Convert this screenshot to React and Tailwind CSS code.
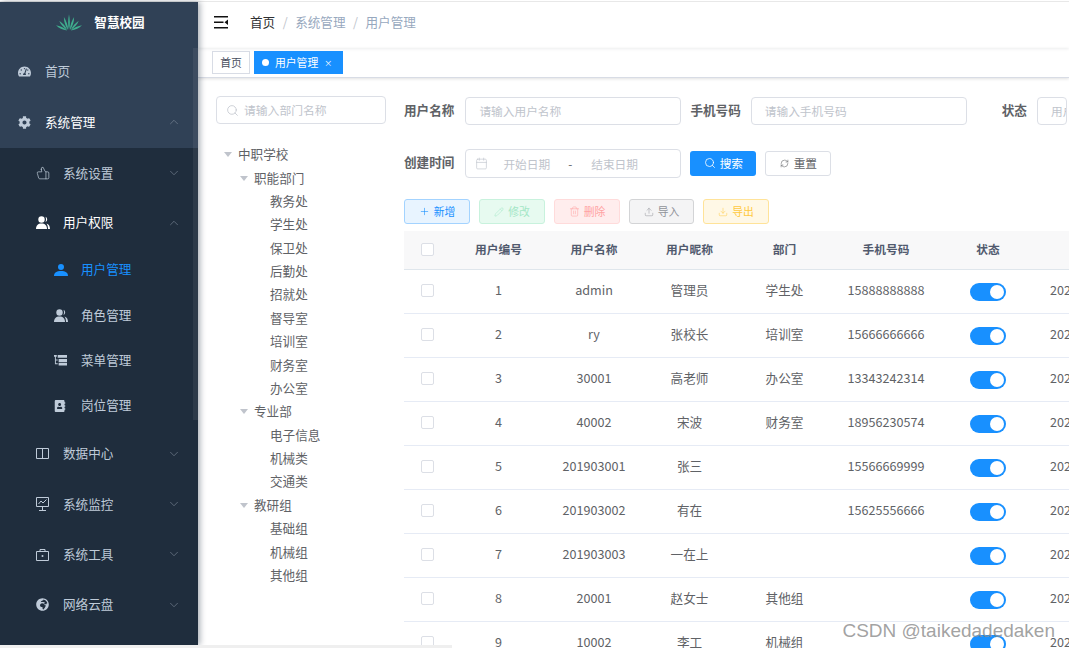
import { Calendar, ChevronDown, ChevronUp, Download, Pencil, Plus, RefreshCw, Search, ThumbsUp, Trash2, Upload } from 'lucide-react'
import { FaAddressBook, FaCog, FaGlobeAfrica, FaTachometerAlt } from 'react-icons/fa'

const fontStack = { fontFamily: '"Noto Sans CJK SC", "Liberation Sans", sans-serif' }

function MenuTree() {
  return (
    <svg viewBox="0 0 14 14" width="13" height="13" fill="currentColor">
      <path d="M0 1h3v2H0zM4 1h10v3H4zM1 3h1v8H1zM2 6h2v1H2zM2 10h2v1H2zM5 5.500h9v3H5zM5 9.500h9v3H5z" />
    </svg>
  )
}

function People() {
  return (
    <svg viewBox="0 0 14 13" width="14" height="13" fill="currentColor">
      <circle cx="5.500" cy="3.500" r="3.200" />
      <path d="M0 13c0-3.500 2-5.500 5.500-5.500S11 9.500 11 13z" />
      <path d="M9.500.8a3 3 0 0 1 0 5.400c.7-1.700.7-3.700 0-5.400zM10.500 7.500c2.200.5 3.500 2.500 3.500 5.500h-2c0-2.200-.4-4-1.500-5.500z" />
    </svg>
  )
}

function Person() {
  return (
    <svg viewBox="0 0 14 12" width="14" height="12" fill="currentColor">
      <circle cx="7" cy="3" r="3" />
      <path d="M0 12c0-3.200 2.500-5 7-5s7 1.800 7 5z" />
    </svg>
  )
}

function BoxColumns() {
  return (
    <svg viewBox="0 0 13 11" width="13" height="11" fill="none" stroke="currentColor" strokeWidth="1">
      <path d="M.5.500h12v10H.5zM6.500.500v10" />
    </svg>
  )
}

function MonitorChart() {
  return (
    <svg viewBox="0 0 13 14" width="13" height="14" fill="none" stroke="currentColor" strokeWidth="1">
      <path d="M.5.500h12v9H.5zM6.500 9.500v3.500M3 13.500h7M2.500 7l2.500-3 2 2 3.500-3.500" />
    </svg>
  )
}

function Toolbox() {
  return (
    <svg viewBox="0 0 13 13" width="13" height="13" fill="none" stroke="currentColor" strokeWidth="1">
      <path d="M.5 3.500h12v9H.5zM4 3.500v-2h5v2" />
      <circle cx="6.500" cy="8" r="1" fill="currentColor" stroke="none" />
    </svg>
  )
}

function Logo() {
  return (
    <svg viewBox="0 0 28 18" width="26" height="17" fill="#3fae8e">
      <path d="M14 17C12.500 12 13 5 14 0c1 5 1.500 12 0 17z" />
      <path d="M13 17C10 13 8.500 8 8.500 3 11 7 13 12 13 17z" />
      <path d="M15 17c3-4 4.500-9 4.500-14C17 7 15 12 15 17z" />
      <path d="M12 17C8 14 5 11 3.500 7 7 9.500 10.500 13 12 17z" />
      <path d="M16 17c4-3 7-6 8.500-10C21 9.500 17.500 13 16 17z" />
      <path d="M12 17.500C7 17 3 15 0 12c4 1 9 2.500 12 5.500z" />
      <path d="M16 17.500c5-.5 9-2.500 12-5.500-4 1-9 2.500-12 5.500z" />
    </svg>
  )
}

function SideItem({ icon, label, level = 0, arrow, active, white, rowClass = 'h-[50px]' }) {
  const pad = level === 0 ? 'pl-[18px]' : level === 1 ? 'pl-[36px]' : 'pl-[54px]'
  const color = active ? 'text-[#1890ff]' : white ? 'text-white' : 'text-[#bfcbd9]'
  return (
    <div className={`relative flex shrink-0 items-center ${rowClass} ${pad} ${color} text-[12.600px]`}>
      <span className="flex w-[27px] shrink-0 items-center">{icon}</span>
      <span>{label}</span>
      {arrow === 'down' && <ChevronDown size={14} strokeWidth={1} className="absolute right-[17px] text-[#8590a0]" />}
      {arrow === 'up' && <ChevronUp size={14} strokeWidth={1} className="absolute right-[17px] text-[#8590a0]" />}
    </div>
  )
}

function Sidebar() {
  return (
    <aside className="relative z-10 flex h-[643px] w-[198px] shrink-0 flex-col overflow-hidden bg-[#1f2d3d] shadow-[2px_0_6px_rgba(0,21,41,0.35)]">
      <div className="shrink-0 bg-[#304156]">
        <div className="flex h-[44px] items-center justify-center gap-[12px] pb-[3px] pl-[3px] text-[12.600px] font-bold text-white">
          <Logo />
          <span>智慧校园</span>
        </div>
        <SideItem icon={<FaTachometerAlt size={13} />} label="首页" />
        <SideItem icon={<FaCog size={13} className="text-[#bfcbd9]" />} label="系统管理" arrow="up" white rowClass="h-[52px]" />
      </div>
      <SideItem level={1} icon={<ThumbsUp size={14} strokeWidth={1.2} className="-scale-x-100" />} label="系统设置" arrow="down" />
      <SideItem level={1} icon={<People />} label="用户权限" arrow="up" white rowClass="h-[49px]" />
      <SideItem level={2} icon={<Person />} label="用户管理" active rowClass="h-[45px]" />
      <SideItem level={2} icon={<People />} label="角色管理" rowClass="h-[46px]" />
      <SideItem level={2} icon={<MenuTree />} label="菜单管理" rowClass="h-[45px]" />
      <SideItem level={2} icon={<FaAddressBook size={12} />} label="岗位管理" rowClass="h-[45px]" />
      <SideItem level={1} icon={<BoxColumns />} label="数据中心" arrow="down" rowClass="h-[51px]" />
      <SideItem level={1} icon={<MonitorChart />} label="系统监控" arrow="down" />
      <SideItem level={1} icon={<Toolbox />} label="系统工具" arrow="down" />
      <SideItem level={1} icon={<FaGlobeAfrica size={13} />} label="网络云盘" arrow="down" rowClass="h-[51px]" />
      <SideItem level={1} icon={<BoxColumns />} label="调度中心" arrow="down" />
      <div className="absolute right-0 top-[46px] h-[372px] w-[5px] bg-[#ffffff10]" />
    </aside>
  )
}

function Hamburger() {
  return (
    <svg viewBox="0 0 14 13" width="14" height="13" fill="#111">
      <path d="M0 0h14v1.500H0zM0 5.500h9.500V7H0zM0 11h14v1.500H0zM14 3.500v5.500L10.500 6.300z" />
    </svg>
  )
}

function Topbar() {
  return (
    <div className="flex h-[46px] shrink-0 items-center pb-[6px] pl-[16px] text-[12.600px] shadow-[0_1px_3px_rgba(0,21,41,0.08)]">
      <Hamburger />
      <span className="ml-[22px] text-[#303133]">首页</span>
      <span className="mx-[7.500px] text-[#c0c4cc]">/</span>
      <span className="text-[#97a8be]">系统管理</span>
      <span className="mx-[7.500px] text-[#c0c4cc]">/</span>
      <span className="text-[#97a8be]">用户管理</span>
    </div>
  )
}

function Tags() {
  return (
    <div className="flex h-[30px] shrink-0 items-center gap-[4px] border-b border-[#d8dce5] pl-[14px] text-[10.800px] shadow-[0_1px_3px_rgba(0,0,0,0.12)]">
      <span className="flex h-[23px] w-[38px] items-center justify-center border border-[#d8dce5] text-[#495060]">首页</span>
      <span className="flex h-[23px] w-[89px] items-center border border-[#1890ff] bg-[#1890ff] pl-[7px] text-white">
        <span className="mr-[6px] h-[7px] w-[7px] rounded-full bg-white" />
        用户管理
        <span className="ml-[6px] text-[8px] leading-none">×</span>
      </span>
    </div>
  )
}

const departments = [
  { label: '中职学校', level: 0, open: true },
  { label: '职能部门', level: 1, open: true },
  { label: '教务处', level: 2 },
  { label: '学生处', level: 2 },
  { label: '保卫处', level: 2 },
  { label: '后勤处', level: 2 },
  { label: '招就处', level: 2 },
  { label: '督导室', level: 2 },
  { label: '培训室', level: 2 },
  { label: '财务室', level: 2 },
  { label: '办公室', level: 2 },
  { label: '专业部', level: 1, open: true },
  { label: '电子信息', level: 2 },
  { label: '机械类', level: 2 },
  { label: '交通类', level: 2 },
  { label: '教研组', level: 1, open: true },
  { label: '基础组', level: 2 },
  { label: '机械组', level: 2 },
  { label: '其他组', level: 2 },
]

function DeptTree() {
  return (
    <div className="w-[170px] shrink-0">
      <div className="flex h-[28px] items-center rounded-[4px] border border-[#dcdfe6] pl-[9px] text-[11.800px] text-[#c0c4cc]">
        <Search size={13} strokeWidth={1.4} className="mr-[5px]" />
        请输入部门名称
      </div>
      <div className="mt-[19px] text-[12.600px] text-[#606266]">
        {departments.map(d => (
          <div
            key={d.label}
            className={`flex h-[23.390px] items-center ${d.level === 0 ? 'pl-[8px]' : d.level === 1 ? 'pl-[24px]' : 'pl-[54px]'}`}
          >
            {d.open && <span className="mr-[6px] h-0 w-0 border-x-[4px] border-t-[5px] border-x-transparent border-t-[#c0c4cc]" />}
            {d.label}
          </div>
        ))}
      </div>
    </div>
  )
}

function FormLabel({ children, className = '' }) {
  return <span className={`-mt-[2px] shrink-0 text-[12.600px] font-bold text-[#606266] ${className}`}>{children}</span>
}

function TextInput({ placeholder, className = '' }) {
  return (
    <span className={`flex h-[28px] shrink-0 items-center overflow-hidden whitespace-nowrap rounded-[4px] border border-[#dcdfe6] pl-[13px] text-[11.700px] text-[#c0c4cc] ${className}`}>
      {placeholder}
    </span>
  )
}

function ToolButton({ icon, label, className }) {
  return (
    <span className={`flex h-[25px] shrink-0 items-center justify-center gap-[4px] rounded-[3px] border text-[10.800px] ${className}`}>
      {icon}
      {label}
    </span>
  )
}

function Filters() {
  return (
    <div>
      <div className="flex items-center">
        <FormLabel>用户名称</FormLabel>
        <TextInput placeholder="请输入用户名称" className="ml-[11px] w-[216px]" />
        <FormLabel className="ml-[9px]">手机号码</FormLabel>
        <TextInput placeholder="请输入手机号码" className="ml-[10px] w-[216px]" />
        <FormLabel className="ml-[35px]">状态</FormLabel>
        <TextInput placeholder="用户状态" className="ml-[10px] w-[30px]" />
      </div>
      <div className="mt-[24px] flex items-center">
        <FormLabel>创建时间</FormLabel>
        <span className="ml-[11px] flex h-[29px] w-[216px] shrink-0 items-center rounded-[4px] border border-[#dcdfe6] pl-[9px] text-[11.700px] text-[#c0c4cc]">
          <Calendar size={13} strokeWidth={1.2} className="mr-[15px]" />
          开始日期
          <span className="ml-[18px] mr-[19px] text-[#606266]">-</span>
          结束日期
        </span>
        <span className="ml-[9px] flex h-[25px] w-[66px] items-center justify-center gap-[4px] rounded-[3px] bg-[#1890ff] pb-px text-[11.700px] text-white">
          <Search size={12} strokeWidth={1.6} />
          搜索
        </span>
        <span className="ml-[9px] flex h-[25px] w-[66px] items-center justify-center gap-[5px] rounded-[3px] border border-[#dcdfe6] pb-px text-[11.700px] text-[#606266]">
          <RefreshCw size={9} strokeWidth={1.5} />
          重置
        </span>
      </div>
      <div className="mt-[21px] flex gap-[9px]">
        <ToolButton className="w-[66px] border-[#a3d3ff] bg-[#e8f4ff] text-[#1890ff]" icon={<Plus size={11} strokeWidth={1.3} />} label="新增" />
        <ToolButton className="w-[66px] border-[#c8f2dd] bg-[#e7faf0] text-[#a3e7c6]" icon={<Pencil size={10} strokeWidth={1.2} />} label="修改" />
        <ToolButton className="w-[66px] border-[#ffdbdb] bg-[#ffeded] text-[#ffa3a3]" icon={<Trash2 size={11} strokeWidth={1.2} />} label="删除" />
        <ToolButton className="w-[65px] border-[#d3d4d6] bg-[#f4f4f5] text-[#909399]" icon={<Upload size={10} strokeWidth={1.2} />} label="导入" />
        <ToolButton className="w-[66px] border-[#ffe399] bg-[#fff8e6] text-[#ffc940]" icon={<Download size={10} strokeWidth={1.2} />} label="导出" />
      </div>
    </div>
  )
}

const rows = [
  ['1', 'admin', '管理员', '学生处', '15888888888'],
  ['2', 'ry', '张校长', '培训室', '15666666666'],
  ['3', '30001', '高老师', '办公室', '13343242314'],
  ['4', '40002', '宋波', '财务室', '18956230574'],
  ['5', '201903001', '张三', '', '15566669999'],
  ['6', '201903002', '有在', '', '15625556666'],
  ['7', '201903003', '一在上', '', ''],
  ['8', '20001', '赵女士', '其他组', ''],
  ['9', '10002', '李工', '机械组', ''],
]

const gridCols = 'grid grid-cols-[47px_95px_96px_95px_95px_108px_96px_180px]'

function Table() {
  return (
    <div className="mt-[7px] w-[900px] text-[12.600px]">
      <div className={`${gridCols} h-[39px] items-center border-b border-[#dfe6ec] bg-[#f8f8f9] pb-[2px] text-center text-[11.700px] font-bold text-[#515a6e]`}>
        <span className="ml-[17px] h-[13px] w-[13px] rounded-[2px] border border-[#dcdfe6] bg-white" />
        {['用户编号', '用户名称', '用户昵称', '部门', '手机号码', '状态'].map(h => <span key={h}>{h}</span>)}
        <span />
      </div>
      {rows.map(r => (
        <div key={r[0]} className={`${gridCols} h-[44px] items-center border-b border-[#e6ebf5] pb-[2px] text-center text-[#606266]`}>
          <span className="ml-[17px] h-[13px] w-[13px] rounded-[2px] border border-[#dcdfe6] bg-white" />
          {r.map((c, i) => <span key={i}>{c}</span>)}
          <span className="mx-auto mt-[3px] flex h-[18px] w-[36px] items-center justify-end rounded-full bg-[#1890ff] pr-[2px]">
            <span className="h-[14px] w-[14px] rounded-full bg-white" />
          </span>
          <span className="whitespace-nowrap pl-[14px] text-left">2021</span>
        </div>
      ))}
    </div>
  )
}

export default function App() {
  return (
    <div className="relative h-[648px] w-[1069px] overflow-hidden bg-white pt-px" style={fontStack}>
      <div className="flex h-[647px] items-start border-t border-[#e8e8e8]">
        <Sidebar />
        <main className="flex h-full min-w-0 flex-1 flex-col overflow-hidden">
          <Topbar />
          <Tags />
          <div className="flex gap-[18px] pl-[18px] pt-[18px]">
            <DeptTree />
            <div className="min-w-0 flex-1 overflow-hidden pt-[1px]">
              <Filters />
              <Table />
            </div>
          </div>
        </main>
      </div>
      <div className="absolute bottom-0 left-0 z-20 h-[3px] w-[452px] bg-[#efefef]" />
      <span className="absolute bottom-[3px] right-[14px] z-20 text-[19px] text-[#8a8a8acc]" style={{ fontFamily: '"Liberation Sans", sans-serif' }}>CSDN @taikedadedaken</span>
    </div>
  )
}
